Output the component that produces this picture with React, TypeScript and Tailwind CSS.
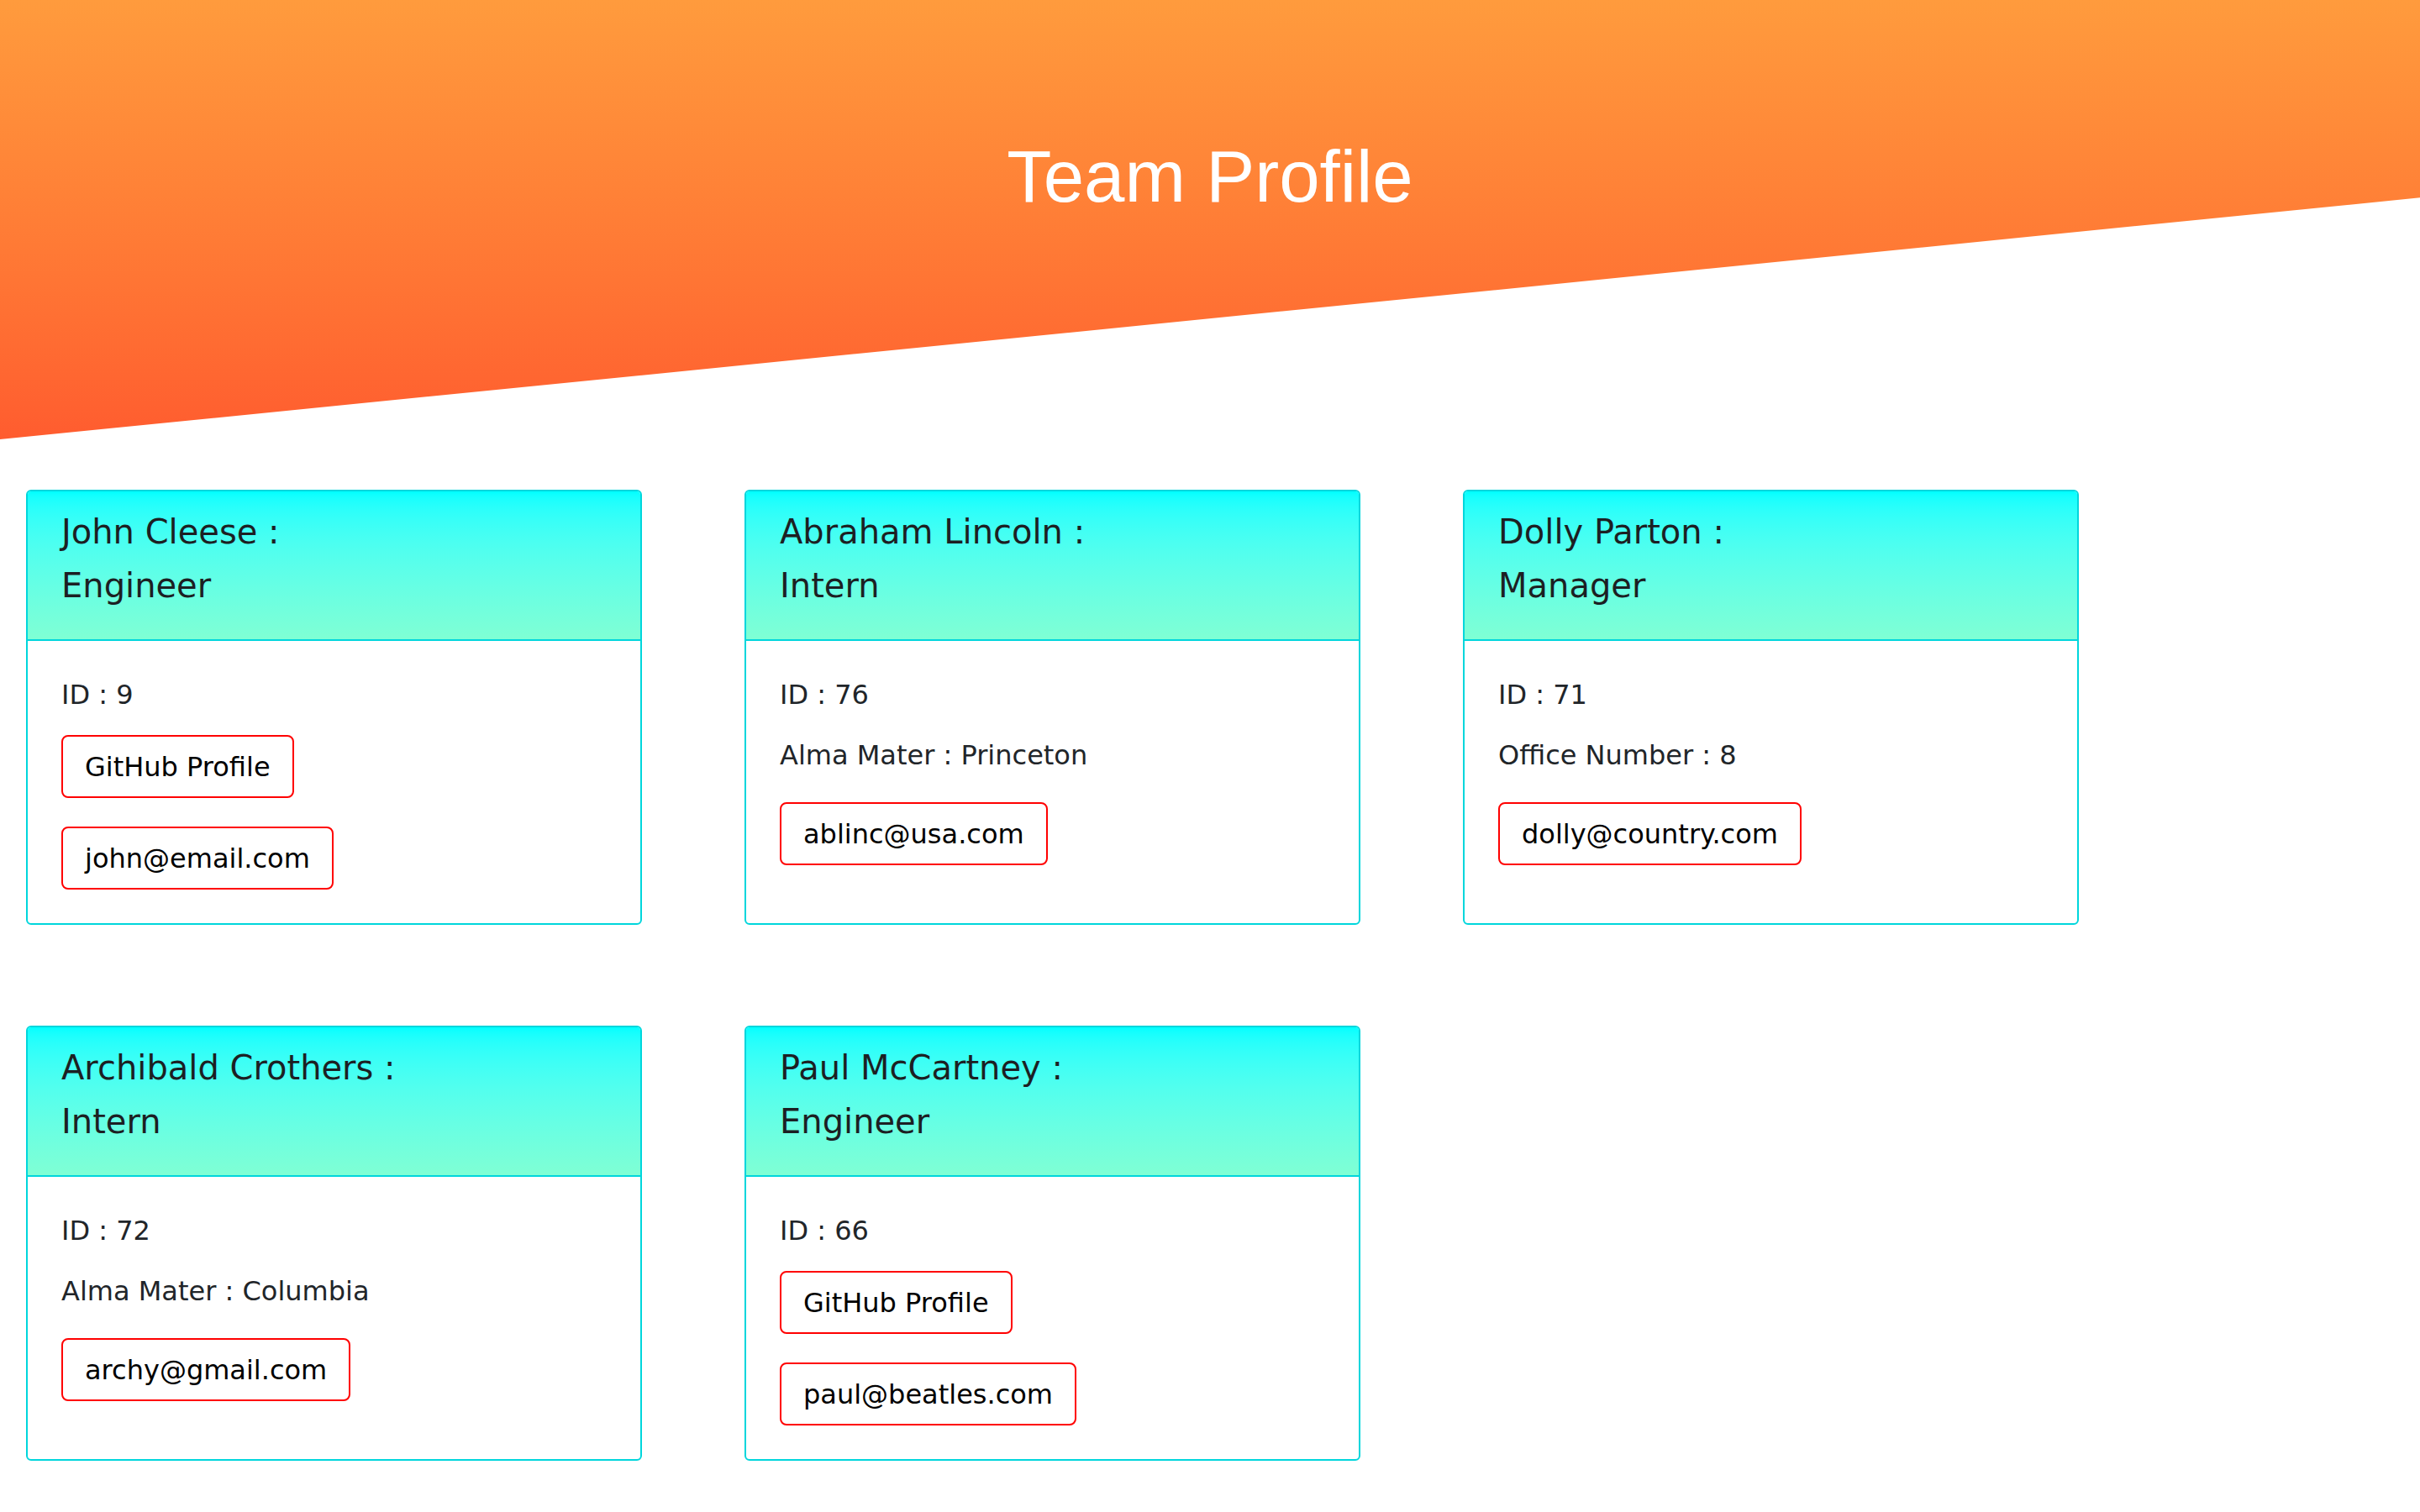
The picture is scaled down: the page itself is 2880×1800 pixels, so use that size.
import React from "react";

type Member = {
  name: string;
  role: string;
  id: number;
  email: string;
  github?: string;
  extra?: string;
};

const team: Member[] = [
  { name: "John Cleese", role: "Engineer", id: 9, email: "john@email.com", github: "GitHub Profile" },
  { name: "Abraham Lincoln", role: "Intern", id: 76, email: "ablinc@usa.com", extra: "Alma Mater : Princeton" },
  { name: "Dolly Parton", role: "Manager", id: 71, email: "dolly@country.com", extra: "Office Number : 8" },
  { name: "Archibald Crothers", role: "Intern", id: 72, email: "archy@gmail.com", extra: "Alma Mater : Columbia" },
  { name: "Paul McCartney", role: "Engineer", id: 66, email: "paul@beatles.com", github: "GitHub Profile" },
];

function LinkBox({ label, className = "" }: { label: string; className?: string }) {
  return (
    <div className={`flex ${className}`}>
      <a className="flex h-[75px] items-center rounded-[8px] border-2 border-[#ff0000] px-[26px] text-[32px] text-black">
        {label}
      </a>
    </div>
  );
}

function Card({ member }: { member: Member }) {
  return (
    <div className="flex flex-col overflow-hidden rounded-[6px] border-2 border-[#00d6dc] bg-white">
      <div className="border-b-2 border-[#00d6dc] bg-linear-to-b from-[#00ffff] to-[#7fffd4] px-[40px] py-[24px] text-[40px] text-[#1c1f23]">
        <h5 className="mb-[16px] h-[48px] leading-[48px]">{member.name} :</h5>
        <h5 className="mb-[16px] h-[48px] leading-[48px]">{member.role}</h5>
      </div>
      <div className="flex-1 p-[40px] text-[32px] leading-[48px] text-[#212529]">
        <p className="mb-[24px]">ID : {member.id}</p>
        {member.github ? (
          <>
            <LinkBox label={member.github} className="mb-[34px]" />
            <LinkBox label={member.email} />
          </>
        ) : (
          <>
            <p className="mb-[32px]">{member.extra}</p>
            <LinkBox label={member.email} />
          </>
        )}
      </div>
    </div>
  );
}

export default function App() {
  return (
    <div className="min-h-screen bg-white font-['DejaVu_Sans',sans-serif]">
      <header className="flex h-[523px] justify-center bg-linear-to-b from-[#ff9b3d] to-[#ff5c2f] [clip-path:polygon(0_0,100%_0,100%_45%,0_100%)]">
        <h1 className="mt-[160px] h-fit font-['Liberation_Sans',Arial,sans-serif] text-[87px] leading-[100px] text-white">
          Team Profile
        </h1>
      </header>
      <main className="grid grid-cols-[repeat(3,733px)] gap-x-[122px] gap-y-[120px] pl-[31px] pt-[60px]">
        {team.map((m) => (
          <Card key={m.id} member={m} />
        ))}
      </main>
    </div>
  );
}
